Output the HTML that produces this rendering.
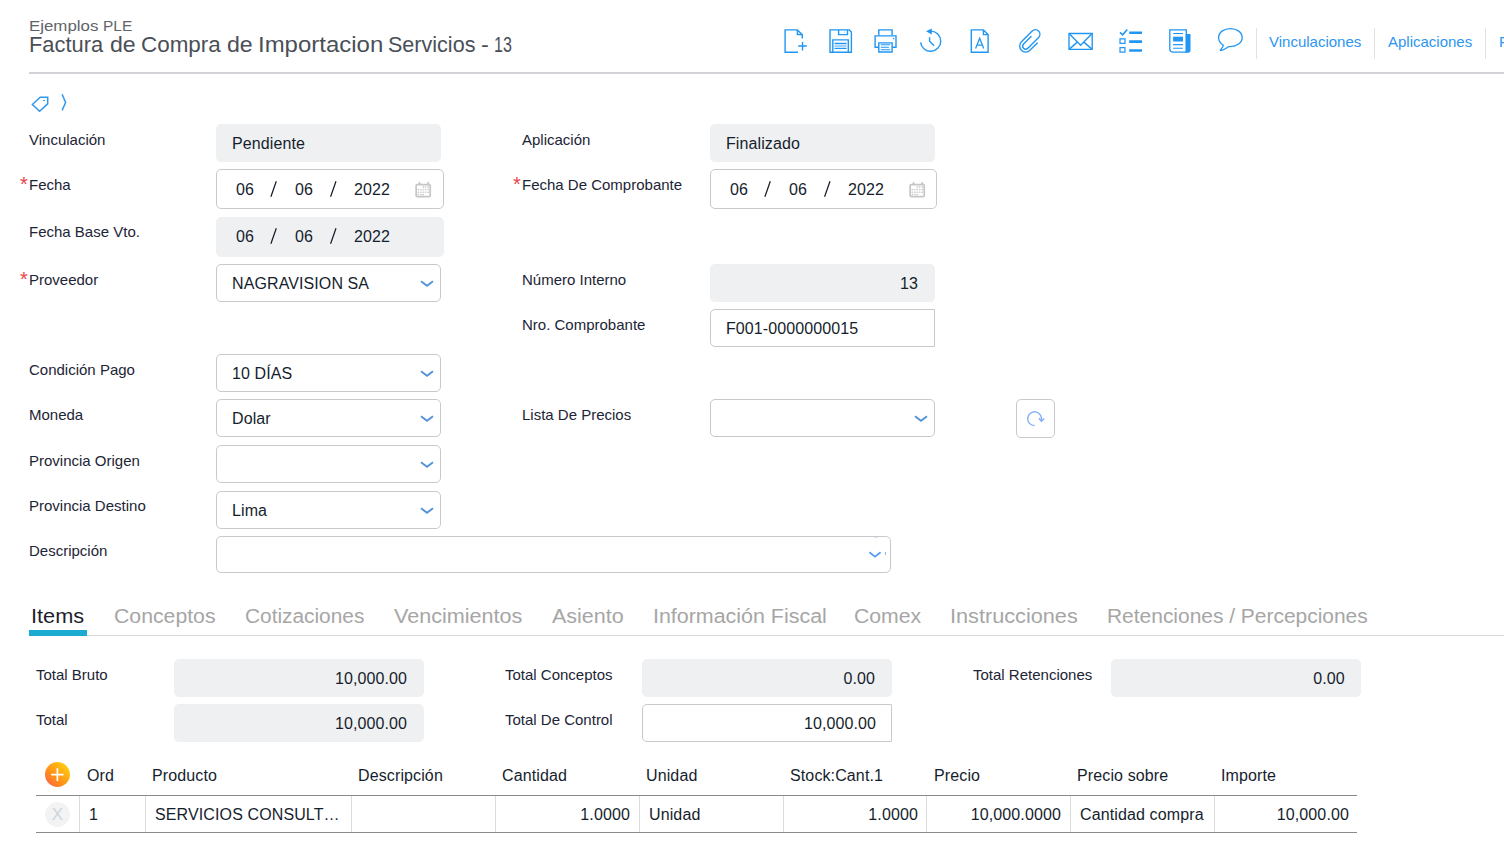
<!DOCTYPE html>
<html><head><meta charset="utf-8">
<style>
*{box-sizing:border-box;margin:0;padding:0}
html,body{width:1504px;height:843px;overflow:hidden;background:#fff}
body{font-family:"Liberation Sans",sans-serif;color:#212529;position:relative}
.a{position:absolute;white-space:nowrap}
.sub{top:16.5px;font-size:15px;color:#5f6368;transform-origin:0 0}
.title{top:32px;font-size:22px;color:#4a4f57;transform-origin:0 0}
.hline{left:29px;top:72px;width:1475px;height:2px;background:#d2d3d7}
.lbl{font-size:15px;color:#1c2536}
.req{color:#e8414a;font-size:20px;line-height:20px}
.box{position:absolute;border:1px solid #c8c9cb;border-radius:5px;background:#fff;font-size:16px;color:#161e2d;letter-spacing:0.1px}
.box.g{background:#eff0f2;border-color:#eff0f2}
.box .t{position:absolute;left:15px;top:10px}
.chev{position:absolute;right:6px;top:14px;width:14px;height:9px}
.tab{font-size:20px;color:#a6a6a6;top:605px;transform-origin:0 0}
.tlbl{font-size:15px;color:#1c2536}
.th{font-size:16px;color:#161e2d;top:767px;letter-spacing:0.12px}
.td{font-size:16px;color:#161e2d;top:806px;letter-spacing:0.12px}
.vsep{position:absolute;top:796px;width:1px;height:36px;background:#dcdcdc}
.ic{position:absolute;top:26px}
.link{font-size:15px;color:#2d96ef;top:33px}
.vdiv{position:absolute;top:28px;width:1px;height:31px;background:#e3e3e3}
</style></head><body>
<div class="a sub" style="left:29.23px;transform:scaleX(1.1238)">Ejemplos</div><div class="a sub" style="left:103.27px;transform:scaleX(1.0296)">PLE</div>
<div class="a title" style="left:29.21px;transform:scaleX(0.9932)">Factura</div><div class="a title" style="left:110.35px;transform:scaleX(1.0522)">de</div><div class="a title" style="left:141.48px;transform:scaleX(1.0192)">Compra</div><div class="a title" style="left:227.05px;transform:scaleX(1.0522)">de</div><div class="a title" style="left:257.92px;transform:scaleX(1.0893)">Importacion</div><div class="a title" style="left:388.32px;transform:scaleX(0.9795)">Servicios</div><div class="a title" style="left:480.73px;transform:scaleX(1.0667)">-</div><div class="a title" style="left:493.87px;transform:scaleX(0.7304)">13</div>
<div class="a hline"></div>

<!-- toolbar icons -->
<svg class="a" style="left:0;top:0" width="1504" height="70" viewBox="0 0 1504 70">
<g fill="none" stroke="#2196f3" stroke-width="1.4" stroke-linecap="butt" stroke-linejoin="miter">
<!-- new doc -->
<path d="M798 52.2 H785.1 V29.9 H797.4 L802.3 34.8 V38.5"/>
<path d="M797.4 29.9 V34.5 H802.3"/>
<path d="M798.2 46 H806.8 M802.5 42 V50.4"/>
<!-- save -->
<path d="M830 29.9 H849.3 L851.4 32 V52.2 H830 Z"/>
<path d="M838.6 29.9 V34.6 H847.5 V29.9"/>
<path d="M832.8 52.2 V39.9 H848.3 V52.2"/>
<path d="M834.5 43.5 H846.6 M834.5 48.4 H846.6"/>
<path d="M834.5 46 H846.6" stroke-width="1.2" stroke-opacity="0.7"/>
<!-- printer -->
<path d="M878.8 35.3 V29.9 H892.1 V35.3"/>
<path d="M878.8 47.2 H875.1 V35.9 H896 V47.2 H892.1"/>
<path d="M878.8 42.9 H892.1 V52 H878.8 Z"/>
<path d="M880.8 44.8 H890.1 M880.8 47.3 H888.9 M880.8 49.7 H890.1" stroke-width="1.1"/>
<!-- history -->
<path d="M920.6 42.4 A10.1 10.1 0 1 0 931.2 31.1"/>
<path d="M929.6 37.2 V41.2 L934.1 45.7"/>
<!-- A doc -->
<path d="M971.3 29.9 H983.4 L988.1 34.6 V52.2 H971.3 Z"/>
<path d="M983.4 29.9 V34.6 H988.1"/>
<path d="M975.6 48.6 L979.7 38.3 L983.7 48.6 M977.1 45.1 H982.3" stroke-width="1.3"/>
<!-- paperclip -->
<path transform="translate(1025.7 46.1) rotate(45)" d="M6 -10.4 L6 0 A6 6 0 0 1 -6 0 L-6 -15.2 A4.5 4.5 0 0 1 3 -15.2 L3 0 A3 3 0 0 1 -3 0 L-3 -10.6" stroke-linecap="round"/>
<!-- envelope -->
<path d="M1069 33.5 H1092.2 V49.4 H1069 Z"/>
<path d="M1069.3 33.8 L1080.6 45.3 L1091.9 33.8"/>
<path d="M1069.3 49.1 L1077.3 42.1 M1091.9 49.1 L1083.9 42.1"/>
<!-- checklist -->
<path d="M1120 32.4 L1122.6 34.8 L1127.3 29.5" stroke-width="1.6"/>
<path d="M1120 38.9 H1125 V43.3 H1120 Z M1120 47.7 H1125 V52.2 H1120 Z" stroke-width="1.2"/>
<path d="M1129.2 32.7 H1142 M1129.2 41.6 H1142 M1129.2 50.5 H1142" stroke-width="2.6"/>
<!-- newspaper -->
<path d="M1186.3 29.8 V52.2 H1173 A3.3 3.3 0 0 1 1169.8 49 V29.8 Z" stroke-width="1.3"/>
<path d="M1185.7 34 H1190.5 V50.3 A2.5 2.5 0 0 1 1188 52.8 H1185.7 Z" fill="#2196f3" stroke="none"/>
<path d="M1173.1 33.5 H1183 M1173.1 44.6 H1183 M1173.1 48.3 H1183" stroke-width="1.1"/>
<rect x="1173.1" y="36.7" width="9.9" height="4.8" fill="#2196f3" stroke="none"/>
<!-- bubble -->
<path d="M1223.3 45.2 C1219.5 43 1218.6 40.3 1218.6 37.6 C1218.6 32.3 1223.8 28.6 1230.4 28.6 C1237 28.6 1242.2 32.3 1242.2 37.6 C1242.2 42.9 1236.6 46.6 1230.4 46.6 C1229.6 46.6 1229 46.6 1228.4 46.7 C1226 48.3 1223.5 50.3 1220.8 50.6 C1220.3 50.6 1220.2 50.1 1220.6 49.7 C1222 48.2 1223.3 46.5 1223.3 45.2 Z" stroke-width="1.3"/>
</g>
<path d="M926 31.3 L931.8 28.4 L931.8 34.6 Z" fill="#2196f3"/>
<circle cx="893.5" cy="38.5" r="0.8" fill="#2196f3"/>
<circle cx="844.8" cy="32" r="0.6" fill="#2196f3" fill-opacity="0.6"/>
</svg>
<div class="vdiv" style="left:1256px"></div>
<div class="a link" style="left:1269px">Vinculaciones</div>
<div class="vdiv" style="left:1374px"></div>
<div class="a link" style="left:1388px">Aplicaciones</div>
<div class="vdiv" style="left:1485px"></div>
<div class="a link" style="left:1499px">F</div>

<!-- tag + chevron -->
<svg class="a" style="left:30px;top:93px" width="40" height="20" viewBox="0 0 40 20">
<path d="M2.4 11.5 L10.2 4.2 H17.7 V10.8 L9.6 18.3 Z" fill="none" stroke="#2f97ec" stroke-width="1.5" stroke-linejoin="miter"/>
<ellipse cx="14" cy="7.5" rx="1" ry="0.7" fill="#2f97ec"/>
<path d="M32.1 1.3 L35.6 9.5 L32.1 17.4" fill="none" stroke="#2f97ec" stroke-width="1.5"/>
</svg>

<!-- left column labels -->
<div class="a lbl" style="left:29px;top:131px">Vinculación</div>
<div class="a req" style="left:20px;top:174px">*</div><div class="a lbl" style="left:29px;top:176px">Fecha</div>
<div class="a lbl" style="left:29px;top:223px">Fecha Base Vto.</div>
<div class="a req" style="left:20px;top:269px">*</div><div class="a lbl" style="left:29px;top:271px">Proveedor</div>
<div class="a lbl" style="left:29px;top:361px">Condición Pago</div>
<div class="a lbl" style="left:29px;top:406px">Moneda</div>
<div class="a lbl" style="left:29px;top:452px">Provincia Origen</div>
<div class="a lbl" style="left:29px;top:497px">Provincia Destino</div>
<div class="a lbl" style="left:29px;top:542px">Descripción</div>

<!-- left column boxes -->
<div class="box g" style="left:216px;top:124px;width:225px;height:38px"><span class="t" style="top:10px">Pendiente</span></div>
<div class="box" style="left:216px;top:169px;width:228px;height:40px" ><span class="t" style="left:19px;top:11px">06</span><svg style="position:absolute;left:0;top:0" width="130" height="36"><path d="M59.3 11.3 L53.9 26.7 M119 11.3 L113.6 26.7" stroke="#161e2d" stroke-width="1.25" fill="none"/></svg><span class="t" style="left:78px;top:11px">06</span><span class="t" style="left:137px;top:11px">2022</span><svg style="position:absolute;left:198px;top:11px" width="18" height="18" viewBox="0 0 18 18"><rect x="1.15" y="3.65" width="14.1" height="12" rx="1.2" fill="none" stroke="#c6c6c6" stroke-width="1.7"/><path d="M3 3.2 L4.5 0.2 L6 3.2 Z M11.7 3.2 L13.2 0.2 L14.7 3.2 Z" fill="#c6c6c6"/><g fill="#c4c4c4"><rect x="7.6000000000000005" y="5.3" width="1.4" height="1.4"/><rect x="9.9" y="5.3" width="1.4" height="1.4"/><rect x="12.600000000000001" y="5.3" width="1.4" height="1.4"/><rect x="2.5999999999999996" y="7.8999999999999995" width="1.4" height="1.4"/><rect x="5.2" y="7.8999999999999995" width="1.4" height="1.4"/><rect x="7.6000000000000005" y="7.8999999999999995" width="1.4" height="1.4"/><rect x="9.9" y="7.8999999999999995" width="1.4" height="1.4"/><rect x="12.600000000000001" y="7.8999999999999995" width="1.4" height="1.4"/><rect x="2.5999999999999996" y="10.600000000000001" width="1.4" height="1.4"/><rect x="5.2" y="10.600000000000001" width="1.4" height="1.4"/><rect x="7.6000000000000005" y="10.600000000000001" width="1.4" height="1.4"/><rect x="9.9" y="10.600000000000001" width="1.4" height="1.4"/><rect x="12.600000000000001" y="10.600000000000001" width="1.4" height="1.4"/><rect x="2.5999999999999996" y="12.9" width="1.4" height="1.4"/><rect x="5.2" y="12.9" width="1.4" height="1.4"/><rect x="7.6000000000000005" y="12.9" width="1.4" height="1.4"/></g><g fill="#e4e4e4"><rect x="3.3" y="8.3" width="10" height="0.6"/><rect x="3.3" y="11" width="10" height="0.6"/></g></svg></div>
<div class="box g" style="left:216px;top:217px;width:228px;height:40px" ><span class="t" style="left:19px;top:10px">06</span><svg style="position:absolute;left:0;top:-1px" width="130" height="36"><path d="M59.3 11.3 L53.9 26.7 M119 11.3 L113.6 26.7" stroke="#161e2d" stroke-width="1.25" fill="none"/></svg><span class="t" style="left:78px;top:10px">06</span><span class="t" style="left:137px;top:10px">2022</span></div>
<div class="box" style="left:216px;top:264px;width:225px;height:38px"><span class="t" style="top:10px">NAGRAVISION SA</span><svg class="chev" viewBox="0 0 14 9"><path d="M1 2.2 L7 6.7 L13 2.2" fill="none" stroke="#5592d8" stroke-width="1.9"/></svg></div>
<div class="box" style="left:216px;top:354px;width:225px;height:38px"><span class="t" style="top:10px">10 DÍAS</span><svg class="chev" viewBox="0 0 14 9"><path d="M1 2.2 L7 6.7 L13 2.2" fill="none" stroke="#5592d8" stroke-width="1.9"/></svg></div>
<div class="box" style="left:216px;top:399px;width:225px;height:38px"><span class="t" style="top:10px">Dolar</span><svg class="chev" viewBox="0 0 14 9"><path d="M1 2.2 L7 6.7 L13 2.2" fill="none" stroke="#5592d8" stroke-width="1.9"/></svg></div>
<div class="box" style="left:216px;top:445px;width:225px;height:38px"><svg class="chev" viewBox="0 0 14 9"><path d="M1 2.2 L7 6.7 L13 2.2" fill="none" stroke="#5592d8" stroke-width="1.9"/></svg></div>
<div class="box" style="left:216px;top:491px;width:225px;height:38px"><span class="t" style="top:10px">Lima</span><svg class="chev" viewBox="0 0 14 9"><path d="M1 2.2 L7 6.7 L13 2.2" fill="none" stroke="#5592d8" stroke-width="1.9"/></svg></div>
<div class="box" style="left:216px;top:536px;width:675px;height:37px"><div style="position:absolute;left:668px;top:15px;width:1px;height:2.5px;background:#8fb8ee"></div><div style="position:absolute;left:657px;top:0px;width:4px;height:1px;background:#d8e6f8"></div><svg class="chev" style="right:8px;top:13px" viewBox="0 0 14 9"><path d="M1.4 2.2 L7 6.7 L12.6 2.2" fill="none" stroke="#5a9cf2" stroke-width="1.8"/></svg></div>

<!-- right column -->
<div class="a lbl" style="left:522px;top:131px">Aplicación</div>
<div class="a req" style="left:513px;top:174px">*</div><div class="a lbl" style="left:522px;top:176px">Fecha De Comprobante</div>
<div class="a lbl" style="left:522px;top:271px">Número Interno</div>
<div class="a lbl" style="left:522px;top:316px">Nro. Comprobante</div>
<div class="a lbl" style="left:522px;top:406px">Lista De Precios</div>

<div class="box g" style="left:710px;top:124px;width:225px;height:38px"><span class="t" style="top:10px">Finalizado</span></div>
<div class="box" style="left:710px;top:169px;width:227px;height:40px" ><span class="t" style="left:19px;top:11px">06</span><svg style="position:absolute;left:0;top:0" width="130" height="36"><path d="M59.3 11.3 L53.9 26.7 M119 11.3 L113.6 26.7" stroke="#161e2d" stroke-width="1.25" fill="none"/></svg><span class="t" style="left:78px;top:11px">06</span><span class="t" style="left:137px;top:11px">2022</span><svg style="position:absolute;left:198px;top:11px" width="18" height="18" viewBox="0 0 18 18"><rect x="1.15" y="3.65" width="14.1" height="12" rx="1.2" fill="none" stroke="#c6c6c6" stroke-width="1.7"/><path d="M3 3.2 L4.5 0.2 L6 3.2 Z M11.7 3.2 L13.2 0.2 L14.7 3.2 Z" fill="#c6c6c6"/><g fill="#c4c4c4"><rect x="7.6000000000000005" y="5.3" width="1.4" height="1.4"/><rect x="9.9" y="5.3" width="1.4" height="1.4"/><rect x="12.600000000000001" y="5.3" width="1.4" height="1.4"/><rect x="2.5999999999999996" y="7.8999999999999995" width="1.4" height="1.4"/><rect x="5.2" y="7.8999999999999995" width="1.4" height="1.4"/><rect x="7.6000000000000005" y="7.8999999999999995" width="1.4" height="1.4"/><rect x="9.9" y="7.8999999999999995" width="1.4" height="1.4"/><rect x="12.600000000000001" y="7.8999999999999995" width="1.4" height="1.4"/><rect x="2.5999999999999996" y="10.600000000000001" width="1.4" height="1.4"/><rect x="5.2" y="10.600000000000001" width="1.4" height="1.4"/><rect x="7.6000000000000005" y="10.600000000000001" width="1.4" height="1.4"/><rect x="9.9" y="10.600000000000001" width="1.4" height="1.4"/><rect x="12.600000000000001" y="10.600000000000001" width="1.4" height="1.4"/><rect x="2.5999999999999996" y="12.9" width="1.4" height="1.4"/><rect x="5.2" y="12.9" width="1.4" height="1.4"/><rect x="7.6000000000000005" y="12.9" width="1.4" height="1.4"/></g><g fill="#e4e4e4"><rect x="3.3" y="8.3" width="10" height="0.6"/><rect x="3.3" y="11" width="10" height="0.6"/></g></svg></div>
<div class="box g" style="left:710px;top:264px;width:225px;height:38px"><span class="t" style="top:10px;left:auto;right:16px">13</span></div>
<div class="box" style="left:710px;top:309px;width:225px;height:38px;border-radius:5px 0 0 5px"><span class="t" style="top:10px">F001-0000000015</span></div>
<div class="box" style="left:710px;top:399px;width:225px;height:38px"><svg class="chev" viewBox="0 0 14 9"><path d="M1 2.2 L7 6.7 L13 2.2" fill="none" stroke="#5592d8" stroke-width="1.9"/></svg></div>
<div class="box" style="left:1016px;top:399px;width:39px;height:39px;border-radius:5px"><svg style="position:absolute;left:9px;top:9px" width="20" height="20" viewBox="0 0 20 20"><path d="M8.6 16.6 A6.9 6.9 0 1 1 15.2 11.6" fill="none" stroke="#80aef8" stroke-width="1.4"/><path d="M12.9 9.3 L15.4 12.3 L18.2 9.5" fill="none" stroke="#80aef8" stroke-width="1.4"/></svg></div>

<!-- tabs -->
<div class="a tab" style="left:31px;color:#1e1e2a;transform:scaleX(1.0875)">Items</div>
<div class="a tab" style="left:114px;transform:scaleX(1.062)">Conceptos</div>
<div class="a tab" style="left:245px;transform:scaleX(1.042)">Cotizaciones</div>
<div class="a tab" style="left:394px;transform:scaleX(1.079)">Vencimientos</div>
<div class="a tab" style="left:552px;transform:scaleX(1.074)">Asiento</div>
<div class="a tab" style="left:653px;transform:scaleX(1.071)">Información Fiscal</div>
<div class="a tab" style="left:854px;transform:scaleX(1.06)">Comex</div>
<div class="a tab" style="left:950px;transform:scaleX(1.084)">Instrucciones</div>
<div class="a tab" style="left:1106.5px;transform:scaleX(1.047)">Retenciones / Percepciones</div>
<div class="a" style="left:29px;top:635px;width:1475px;height:1px;background:#dadada"></div>
<div class="a" style="left:29px;top:630px;width:58px;height:6px;background:#1cabd1"></div>

<!-- totals -->
<div class="a tlbl" style="left:36px;top:666px">Total Bruto</div>
<div class="a tlbl" style="left:36px;top:711px">Total</div>
<div class="a tlbl" style="left:505px;top:666px">Total Conceptos</div>
<div class="a tlbl" style="left:505px;top:711px">Total De Control</div>
<div class="a tlbl" style="left:973px;top:666px">Total Retenciones</div>
<div class="box g" style="left:174px;top:659px;width:250px;height:38px"><span class="t" style="top:10px;left:auto;right:16px">10,000.00</span></div>
<div class="box g" style="left:174px;top:704px;width:250px;height:38px"><span class="t" style="top:10px;left:auto;right:16px">10,000.00</span></div>
<div class="box g" style="left:642px;top:659px;width:250px;height:38px"><span class="t" style="top:10px;left:auto;right:16px">0.00</span></div>
<div class="box" style="left:642px;top:704px;width:250px;height:38px;border-radius:5px 0 0 5px"><span class="t" style="top:10px;left:auto;right:15px">10,000.00</span></div>
<div class="box g" style="left:1111px;top:659px;width:250px;height:38px"><span class="t" style="top:10px;left:auto;right:15.3px">0.00</span></div>

<!-- table -->
<div class="a" style="left:45px;top:762px;width:25px;height:25px;border-radius:50%;background:linear-gradient(225deg,#ffdf18 0%,#ffb012 35%,#ff8a1c 65%,#ff5c62 100%)"></div>
<svg class="a" style="left:45px;top:762px" width="25" height="25"><path d="M6.2 12.6 H18.6 M12.4 6.3 V19" stroke="#fff" stroke-width="1.7"/></svg>

<div class="a th" style="left:87px">Ord</div>
<div class="a th" style="left:152px">Producto</div>
<div class="a th" style="left:358px">Descripción</div>
<div class="a th" style="left:502px">Cantidad</div>
<div class="a th" style="left:646px">Unidad</div>
<div class="a th" style="left:790px">Stock:Cant.1</div>
<div class="a th" style="left:934px">Precio</div>
<div class="a th" style="left:1077px">Precio sobre</div>
<div class="a th" style="left:1221px">Importe</div>
<div class="a" style="left:36px;top:795px;width:1321px;height:1px;background:#8a8a8a"></div>
<div class="a" style="left:36px;top:832px;width:1321px;height:1px;background:#8a8a8a"></div>
<div class="vsep" style="left:79px"></div>
<div class="vsep" style="left:145px"></div>
<div class="vsep" style="left:351px"></div>
<div class="vsep" style="left:495px"></div>
<div class="vsep" style="left:639px"></div>
<div class="vsep" style="left:783px"></div>
<div class="vsep" style="left:926px"></div>
<div class="vsep" style="left:1070px"></div>
<div class="vsep" style="left:1214px"></div>
<div class="a" style="left:45px;top:802px;width:25px;height:25px;border-radius:50%;background:#f3f3f3;color:#cdd3dc;font-size:17px;text-align:center;line-height:25px">X</div>
<div class="a td" style="left:89px">1</div>
<div class="a td" style="left:155px">SERVICIOS CONSULT…</div>
<div class="a td" style="right:874px">1.0000</div>
<div class="a td" style="left:649px">Unidad</div>
<div class="a td" style="right:586px">1.0000</div>
<div class="a td" style="right:443px">10,000.0000</div>
<div class="a td" style="left:1080px">Cantidad compra</div>
<div class="a td" style="right:155px">10,000.00</div>
</body></html>
